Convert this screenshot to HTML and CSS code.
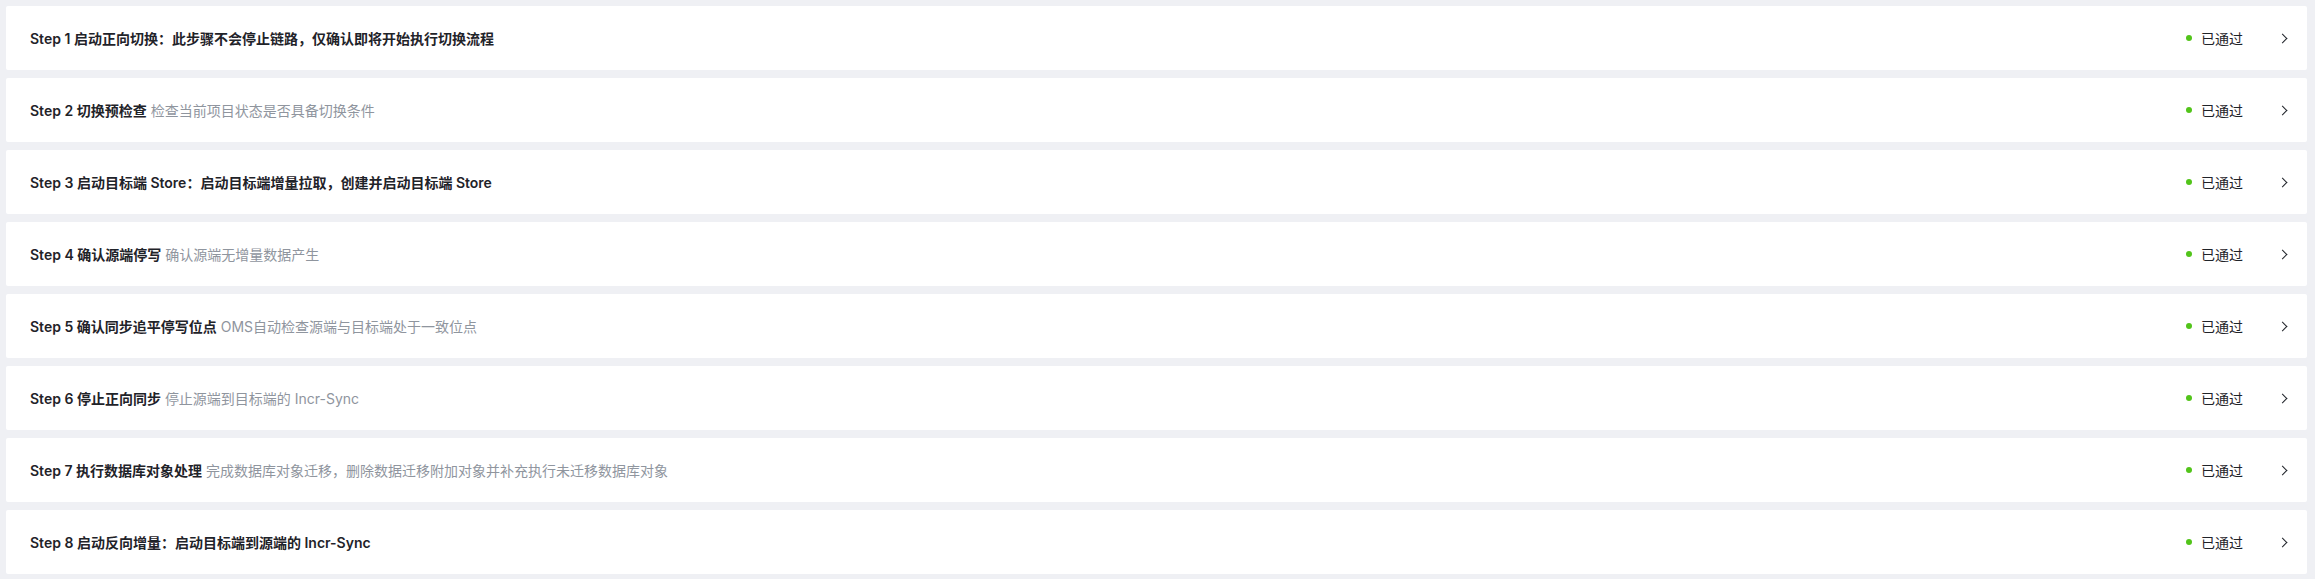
FILE: index.html
```html
<!doctype html>
<html>
  <head>
    <title>Switchover Steps</title>
    <link rel="stylesheet" href="styles.css">
  </head>
  <body>
    <div class="steps">
      <div class="step">
        <div class="step-title">
          <b>Step 1 启动正向切换：此步骤不会停止链路，仅确认即将开始执行切换流程</b>
        </div>
        <div class="step-status"><span class="dot"></span>已通过</div>
        <span class="chevron"></span>
      </div>
      <div class="step">
        <div class="step-title">
          <b>Step 2 切换预检查</b> <span class="desc">检查当前项目状态是否具备切换条件</span>
        </div>
        <div class="step-status"><span class="dot"></span>已通过</div>
        <span class="chevron"></span>
      </div>
      <div class="step">
        <div class="step-title">
          <b>Step 3 启动目标端 Store：启动目标端增量拉取，创建并启动目标端 Store</b>
        </div>
        <div class="step-status"><span class="dot"></span>已通过</div>
        <span class="chevron"></span>
      </div>
      <div class="step">
        <div class="step-title">
          <b>Step 4 确认源端停写</b> <span class="desc">确认源端无增量数据产生</span>
        </div>
        <div class="step-status"><span class="dot"></span>已通过</div>
        <span class="chevron"></span>
      </div>
      <div class="step">
        <div class="step-title">
          <b>Step 5 确认同步追平停写位点</b> <span class="desc">OMS自动检查源端与目标端处于一致位点</span>
        </div>
        <div class="step-status"><span class="dot"></span>已通过</div>
        <span class="chevron"></span>
      </div>
      <div class="step">
        <div class="step-title">
          <b>Step 6 停止正向同步</b> <span class="desc">停止源端到目标端的 Incr-Sync</span>
        </div>
        <div class="step-status"><span class="dot"></span>已通过</div>
        <span class="chevron"></span>
      </div>
      <div class="step">
        <div class="step-title">
          <b>Step 7 执行数据库对象处理</b> <span class="desc">完成数据库对象迁移，删除数据迁移附加对象并补充执行未迁移数据库对象</span>
        </div>
        <div class="step-status"><span class="dot"></span>已通过</div>
        <span class="chevron"></span>
      </div>
      <div class="step">
        <div class="step-title">
          <b>Step 8 启动反向增量：启动目标端到源端的 Incr-Sync</b>
        </div>
        <div class="step-status"><span class="dot"></span>已通过</div>
        <span class="chevron"></span>
      </div>
    </div>
  </body>
</html>
```

FILE: styles.css
```css
body {
  margin: 0;
  background-color: #eff0f4;
  font-family: Inter, "Noto Sans CJK SC", sans-serif;
  font-size: 14px;
  color: #1f2329;
}

.steps {
  display: flex;
  flex-direction: column;
  gap: 8px;
  padding: 6px 8px 5px 6px;
}

.step {
  display: flex;
  align-items: center;
  height: 64px;
  padding: 0 19px 0 24px;
  background-color: #fff;
  border-radius: 2px;
}

.step-title {
  flex: 1;
  white-space: nowrap;
}

.step-title b {
  font-weight: 600;
}

.desc {
  color: #8f959e;
}

.step-status {
  display: flex;
  align-items: center;
  gap: 9px;
  color: #1f2329;
}

.dot {
  width: 6px;
  height: 6px;
  border-radius: 50%;
  background-color: #52c41a;
}

/* right arrow drawn from two borders */
.chevron {
  width: 6px;
  height: 6px;
  margin-left: 36px;
  margin-right: 2px;
  border-top: 1px solid #1f2329;
  border-right: 1px solid #1f2329;
  transform: rotate(45deg);
}
```
